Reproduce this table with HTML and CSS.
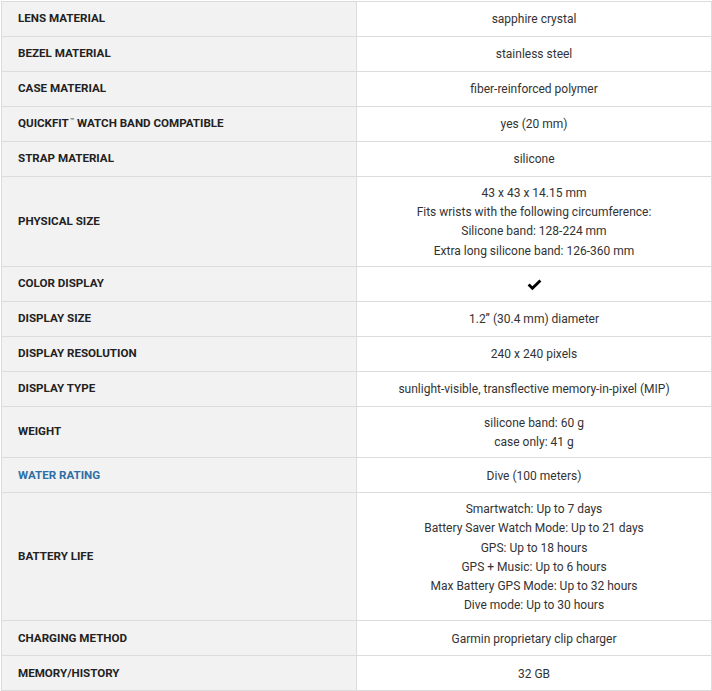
FILE: index.html
```html
<!DOCTYPE html>
<html lang="en">
<head>
<meta charset="utf-8">
<title>Specs</title>
<link rel="stylesheet" href="styles.css">
</head>
<body>
<div class="specs">
  <div class="row"><div class="label">LENS MATERIAL</div><div class="value">sapphire crystal</div></div>
  <div class="row"><div class="label">BEZEL MATERIAL</div><div class="value">stainless steel</div></div>
  <div class="row"><div class="label">CASE MATERIAL</div><div class="value">fiber-reinforced polymer</div></div>
  <div class="row"><div class="label"><span>QUICKFIT<span class="tm">™</span> WATCH BAND COMPATIBLE</span></div><div class="value">yes (20 mm)</div></div>
  <div class="row"><div class="label">STRAP MATERIAL</div><div class="value">silicone</div></div>
  <div class="row"><div class="label">PHYSICAL SIZE</div><div class="value">43 x 43 x 14.15 mm<br>Fits wrists with the following circumference:<br>Silicone band: 128-224 mm<br>Extra long silicone band: 126-360 mm</div></div>
  <div class="row"><div class="label">COLOR DISPLAY</div><div class="value"><svg class="check" width="15" height="12" viewBox="0 0 15 12"><path d="M0.6 6.6 L2.6 4.6 L5.4 7.3 L12.4 0.4 L14.4 2.4 L5.4 11.3 Z" fill="#000"/></svg></div></div>
  <div class="row"><div class="label">DISPLAY SIZE</div><div class="value">1.2” (30.4 mm) diameter</div></div>
  <div class="row"><div class="label">DISPLAY RESOLUTION</div><div class="value">240 x 240 pixels</div></div>
  <div class="row"><div class="label">DISPLAY TYPE</div><div class="value">sunlight-visible, transflective memory-in-pixel (MIP)</div></div>
  <div class="row"><div class="label">WEIGHT</div><div class="value">silicone band: 60 g<br>case only: 41 g</div></div>
  <div class="row"><div class="label link">WATER RATING</div><div class="value">Dive (100 meters)</div></div>
  <div class="row"><div class="label">BATTERY LIFE</div><div class="value">Smartwatch: Up to 7 days<br>Battery Saver Watch Mode: Up to 21 days<br>GPS: Up to 18 hours<br>GPS + Music: Up to 6 hours<br>Max Battery GPS Mode: Up to 32 hours<br>Dive mode: Up to 30 hours</div></div>
  <div class="row"><div class="label">CHARGING METHOD</div><div class="value">Garmin proprietary clip charger</div></div>
  <div class="row"><div class="label">MEMORY/HISTORY</div><div class="value">32 GB</div></div>
</div>
</body>
</html>
```

FILE: styles.css
```css
html, body {
  margin: 0;
  padding: 0;
  background: #fff;
}
body {
  padding: 1px 1px 0 1px;
  font-family: Roboto, "Liberation Sans", Arial, sans-serif;
  color: #333;
}
.specs {
  width: 710px;
  border-top: 1px solid #dcdcdc;
  border-left: 1px solid #dcdcdc;
}
.row {
  display: grid;
  grid-template-columns: 355px 355px;
}
.label, .value {
  box-sizing: border-box;
  min-height: 35px;
  border-right: 1px solid #dcdcdc;
  border-bottom: 1px solid #dcdcdc;
  display: flex;
  align-items: center;
  line-height: 19.2px;
}
.label {
  padding: 6px 16px;
  background: #f2f2f2;
  font-size: 11.6px;
  font-weight: 700;
  color: #222;
}
.label.link {
  color: #2f6ea5;
}
.value {
  padding: 7px 17px 5px 17px;
  background: #fff;
  justify-content: center;
  text-align: center;
  font-size: 12px;
  color: #333;
}
.tm {
  font-size: 7px;
  font-weight: 400;
  vertical-align: 4px;
  line-height: 0;
  margin-left: 1px;
}
.check {
  display: block;
}
```
